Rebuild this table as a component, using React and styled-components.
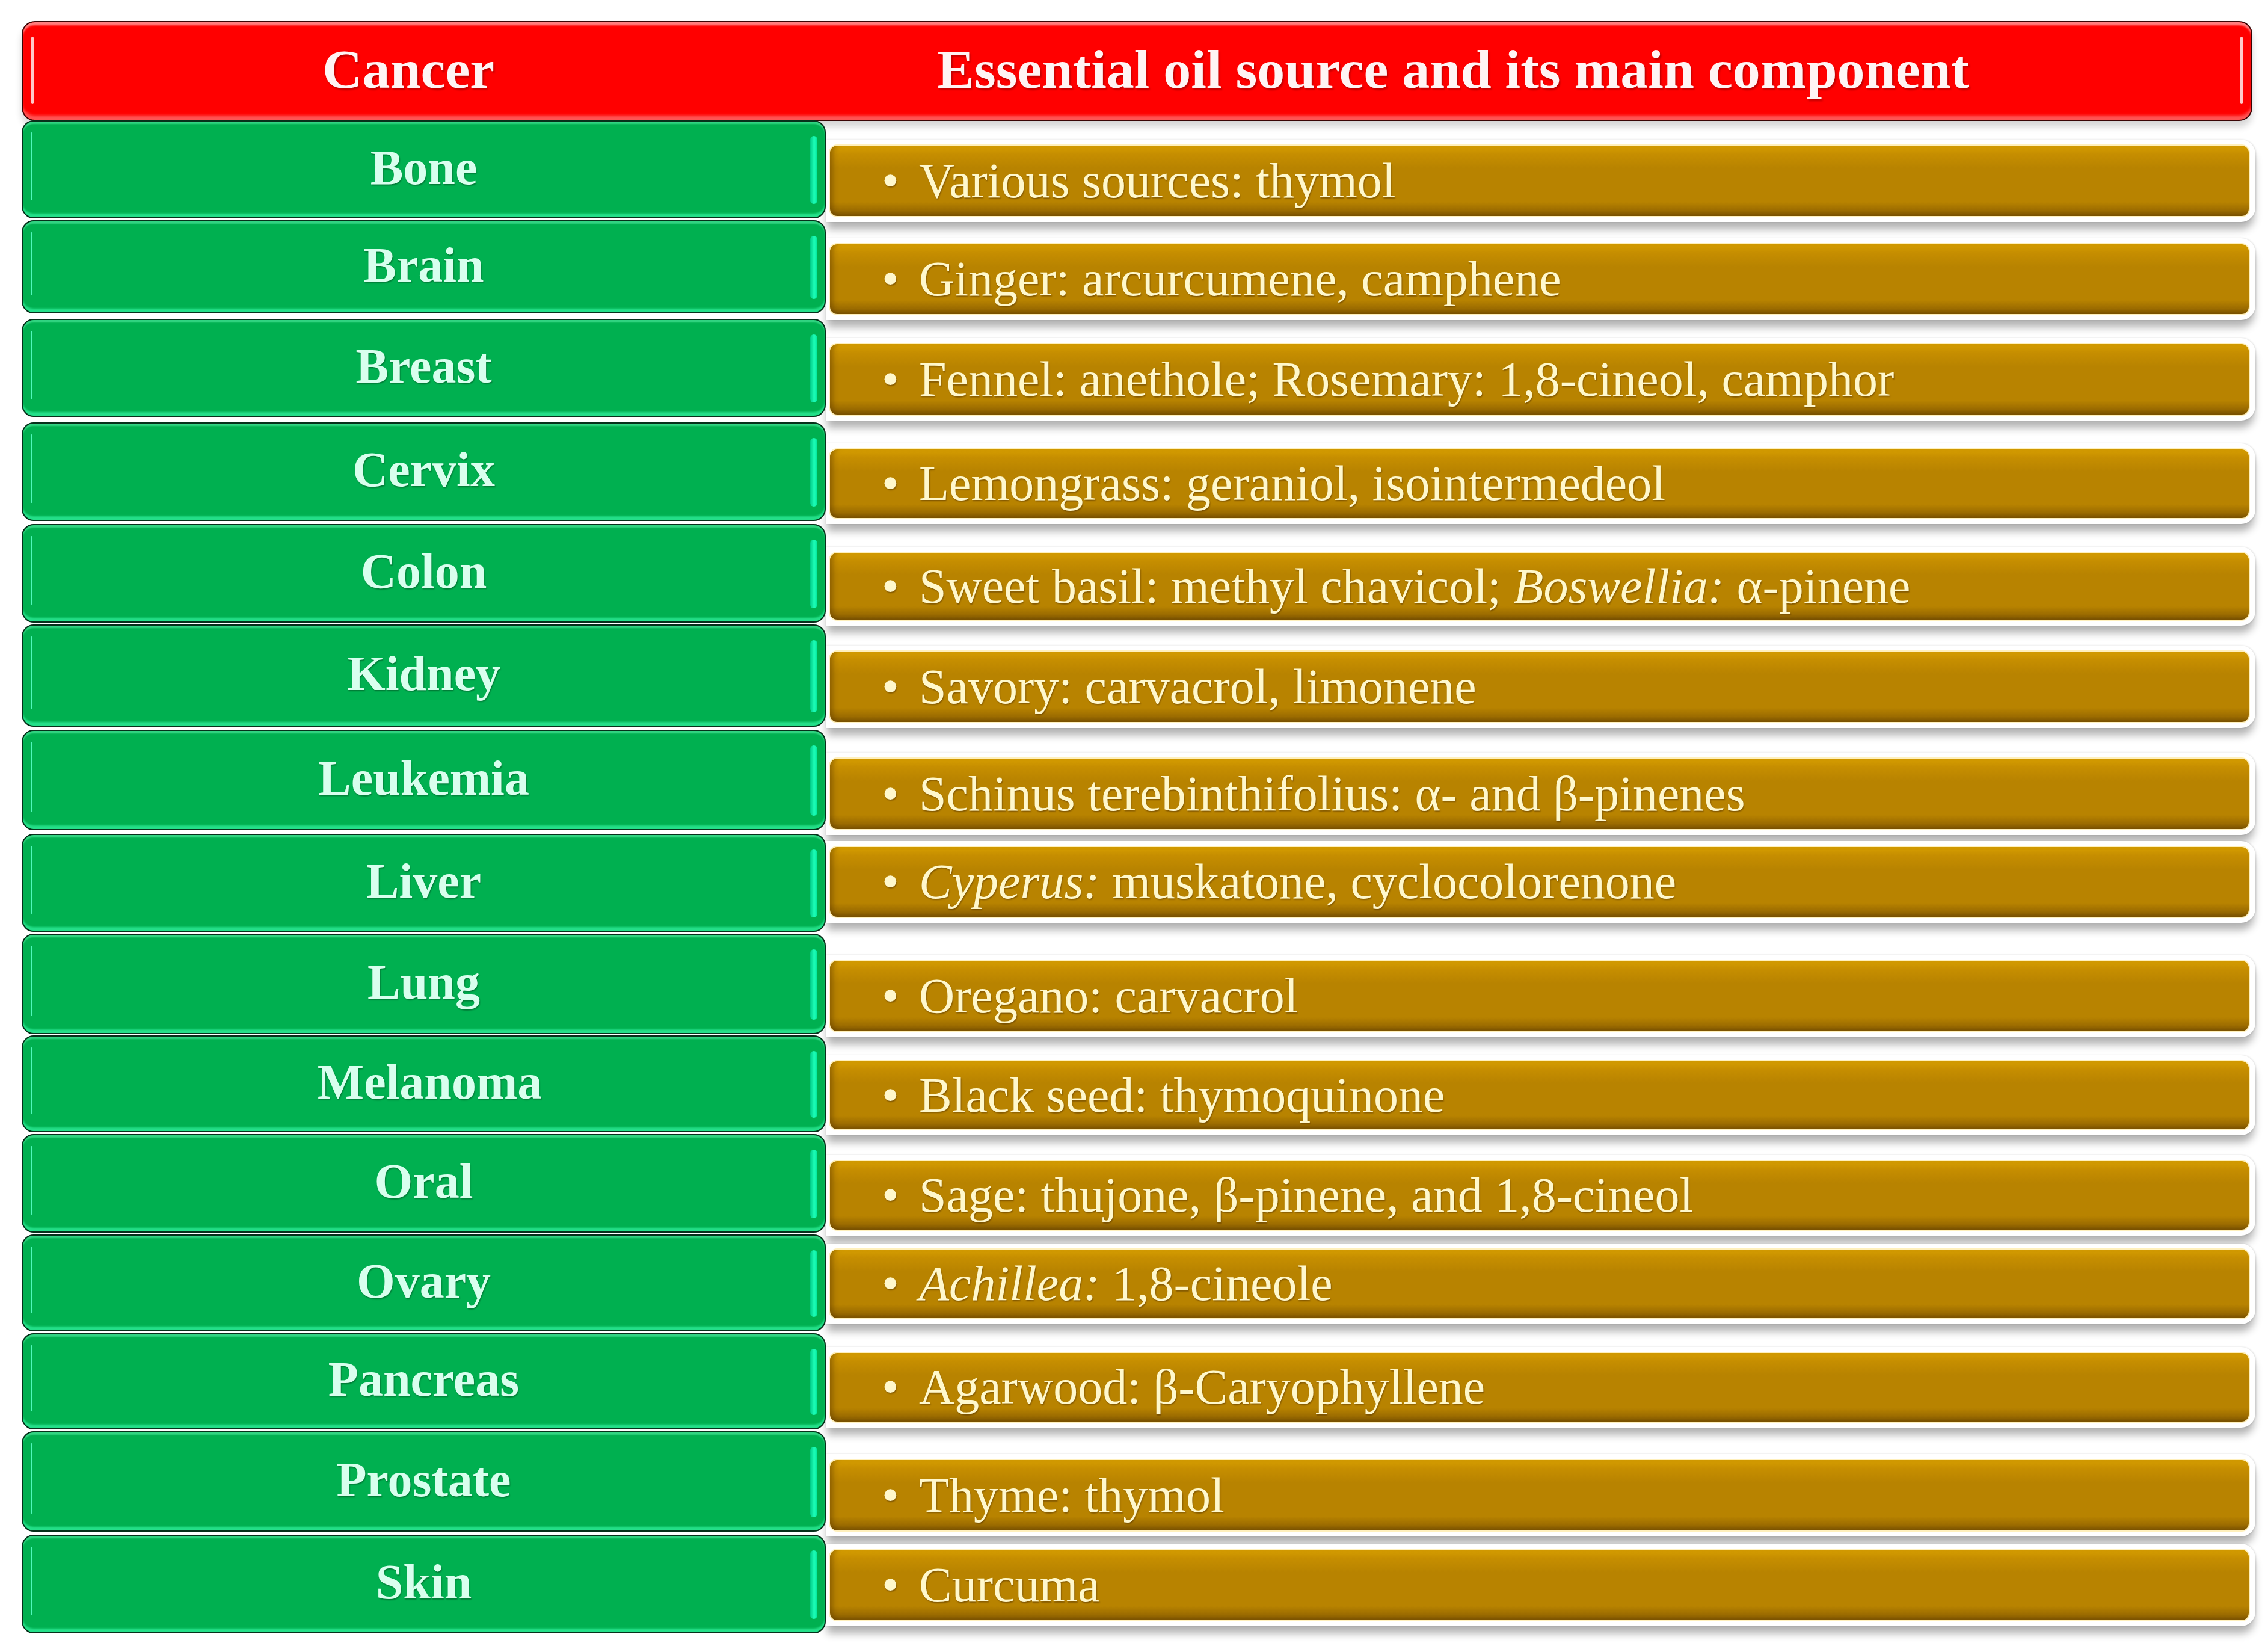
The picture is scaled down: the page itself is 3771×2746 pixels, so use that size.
import React from 'react';
import styled, { createGlobalStyle } from 'styled-components';

const GlobalStyle = createGlobalStyle`
  html, body {
    margin: 0;
    padding: 0;
    background: #ffffff;
  }
  body {
    font-family: 'Liberation Serif', 'Times New Roman', serif;
  }
`;

// ==== layout
const Page = styled.div`
  box-sizing: border-box;
  width: 3771px;
  min-height: 2746px;
  padding: 35px 0 0 36px;
  background: #fff;
`;

const Table = styled.div`
  width: 3714px;
  display: flex;
  flex-direction: column;
`;

// ==== header bar
const Header = styled.div`
  position: relative;
  box-sizing: border-box;
  width: 3709px;
  height: 166px;
  display: flex;
  align-items: center;
  background: #ff0000;
  border: 2px solid #3a0505;
  border-radius: 22px;
  box-shadow:
    inset 0 6px 3px -1px rgba(255, 150, 150, 0.85),
    inset 0 -9px 4px -2px rgba(255, 120, 120, 0.7),
    0 10px 12px rgba(0, 0, 0, 0.16);

  &::before,
  &::after {
    content: '';
    position: absolute;
    top: 24px;
    bottom: 26px;
    width: 4px;
    border-radius: 2px;
    background: rgba(255, 235, 235, 0.85);
  }
  &::before {
    left: 14px;
  }
  &::after {
    right: 14px;
  }
`;

const HeaderCell = styled.div`
  box-sizing: border-box;
  flex: ${p => (p.$grow ? 1 : 'none')};
  width: ${p => (p.$width ? `${p.$width}px` : 'auto')};
  padding-right: ${p => p.$shift || 0}px;
  padding-bottom: 6px;
  text-align: center;
  font-size: 92px;
  font-weight: bold;
  line-height: 1;
  color: #fff4f4;
  text-shadow: 2px 3px 3px rgba(110, 0, 0, 0.45);
  white-space: nowrap;
`;

// ==== body rows
const Row = styled.div`
  display: flex;
  height: ${p => p.$h}px;
  margin-top: ${p => p.$gap}px;
`;

const Label = styled.div`
  position: relative;
  box-sizing: border-box;
  flex: none;
  width: 1337px;
  height: 100%;
  display: flex;
  align-items: center;
  justify-content: center;
  padding-bottom: 6px;
  padding-left: ${p => p.$nudge || 0}px;
  background: #00b050;
  border: 2px solid #06301a;
  border-radius: 20px;
  box-shadow:
    inset 0 5px 2px -1px rgba(110, 255, 190, 0.45),
    inset 0 -7px 3px -1px rgba(60, 255, 175, 0.6);
  font-size: 82px;
  font-weight: bold;
  line-height: 1;
  color: #d8ffee;
  text-shadow: 1px 2px 2px rgba(0, 60, 25, 0.45);
  white-space: nowrap;

  &::before {
    content: '';
    position: absolute;
    left: 13px;
    top: 18px;
    bottom: 28px;
    width: 3px;
    border-radius: 2px;
    background: rgba(90, 255, 200, 0.9);
  }
  &::after {
    content: '';
    position: absolute;
    right: 12px;
    top: 24px;
    bottom: 22px;
    width: 12px;
    border-radius: 6px;
    background: linear-gradient(to right, #00c884, #1effb8 55%, #00e49c);
  }
`;

const Cell = styled.div`
  flex: 1;
  min-width: 0;
  padding-top: ${p => p.$offset}px;
`;

const Frame = styled.div`
  box-sizing: border-box;
  padding: 8px 9px 8px 5px;
  background: #ffffff;
  border-radius: 0 24px 24px 0;
  box-shadow:
    0 14px 14px -2px rgba(0, 0, 0, 0.3),
    1px 0 3px rgba(0, 0, 0, 0.14);
`;

const Bar = styled.div`
  box-sizing: border-box;
  height: ${p => p.$h}px;
  display: flex;
  align-items: center;
  padding-left: 86px;
  border: 2px solid #fff0bc;
  border-radius: 14px;
  background: linear-gradient(
    to bottom,
    #d69e00 0%,
    #c68e00 12%,
    #b88300 32%,
    #b88300 80%,
    #9c6c00 92%,
    #7a5200 100%
  );
  box-shadow: inset 10px 0 8px -5px rgba(90, 55, 0, 0.45);
  font-size: 82px;
  line-height: 1;
  color: #fff8cc;
  text-shadow: 1px 2px 2px rgba(70, 40, 0, 0.45);
  white-space: nowrap;
`;

const Bullet = styled.span`
  display: inline-block;
  width: 62px;
`;

const Em = styled.i`
  font-style: italic;
`;

const rows = [
  { name: 'Bone', top: 199, bottom: 362, gTop: 239, gBottom: 360, text: <>Various sources: thymol</> },
  { name: 'Brain', top: 365, bottom: 520, gTop: 403, gBottom: 523, text: <>Ginger: arcurcumene, camphene</> },
  {
    name: 'Breast',
    top: 529,
    bottom: 692,
    gTop: 569,
    gBottom: 690,
    text: <>Fennel: anethole; Rosemary: 1,8-cineol, camphor</>
  },
  { name: 'Cervix', top: 701, bottom: 865, gTop: 744, gBottom: 862, text: <>Lemongrass: geraniol, isointermedeol</> },
  {
    name: 'Colon',
    top: 870,
    bottom: 1034,
    gTop: 916,
    gBottom: 1031,
    text: (
      <>
        Sweet basil: methyl chavicol; <Em>Boswellia:</Em> α-pinene
      </>
    )
  },
  { name: 'Kidney', top: 1037, bottom: 1207, gTop: 1080, gBottom: 1201, text: <>Savory: carvacrol, limonene</> },
  {
    name: 'Leukemia',
    top: 1212,
    bottom: 1379,
    gTop: 1258,
    gBottom: 1379,
    text: <>Schinus terebinthifolius: α- and β-pinenes</>
  },
  {
    name: 'Liver',
    top: 1385,
    bottom: 1548,
    gTop: 1405,
    gBottom: 1525,
    text: (
      <>
        <Em>Cyperus:</Em> muskatone, cyclocolorenone
      </>
    )
  },
  { name: 'Lung', top: 1551, bottom: 1718, gTop: 1594, gBottom: 1715, text: <>Oregano: carvacrol</> },
  {
    name: 'Melanoma',
    top: 1720,
    bottom: 1881,
    gTop: 1761,
    gBottom: 1878,
    nudge: 20,
    text: <>Black seed: thymoquinone</>
  },
  {
    name: 'Oral',
    top: 1884,
    bottom: 2048,
    gTop: 1927,
    gBottom: 2045,
    text: <>Sage: thujone, β-pinene, and 1,8-cineol</>
  },
  {
    name: 'Ovary',
    top: 2051,
    bottom: 2212,
    gTop: 2074,
    gBottom: 2192,
    text: (
      <>
        <Em>Achillea:</Em> 1,8-cineole
      </>
    )
  },
  { name: 'Pancreas', top: 2215, bottom: 2375, gTop: 2246, gBottom: 2364, text: <>Agarwood: β-Caryophyllene</> },
  { name: 'Prostate', top: 2378, bottom: 2545, gTop: 2424, gBottom: 2545, text: <>Thyme: thymol</> },
  { name: 'Skin', top: 2550, bottom: 2714, gTop: 2573, gBottom: 2694, text: <>Curcuma</> }
];

const HEADER_BOTTOM = 200;
const FRAME_PAD = 8;

export default function App() {
  return (
    <>
      <GlobalStyle />
      <Page>
        <Table>
          <Header>
            <HeaderCell $width={1282}>Cancer</HeaderCell>
            <HeaderCell $grow $shift={230}>
              Essential oil source and its main component
            </HeaderCell>
          </Header>

          {rows.map((row, i) => {
            const prevBottom = i === 0 ? HEADER_BOTTOM : rows[i - 1].bottom;
            return (
              <Row key={row.name} $h={row.bottom - row.top} $gap={row.top - prevBottom}>
                <Label $nudge={row.nudge}>{row.name}</Label>
                <Cell $offset={row.gTop - row.top - FRAME_PAD}>
                  <Frame>
                    <Bar $h={row.gBottom - row.gTop}>
                      <Bullet>•</Bullet>
                      <span>{row.text}</span>
                    </Bar>
                  </Frame>
                </Cell>
              </Row>
            );
          })}
        </Table>
      </Page>
    </>
  );
}
